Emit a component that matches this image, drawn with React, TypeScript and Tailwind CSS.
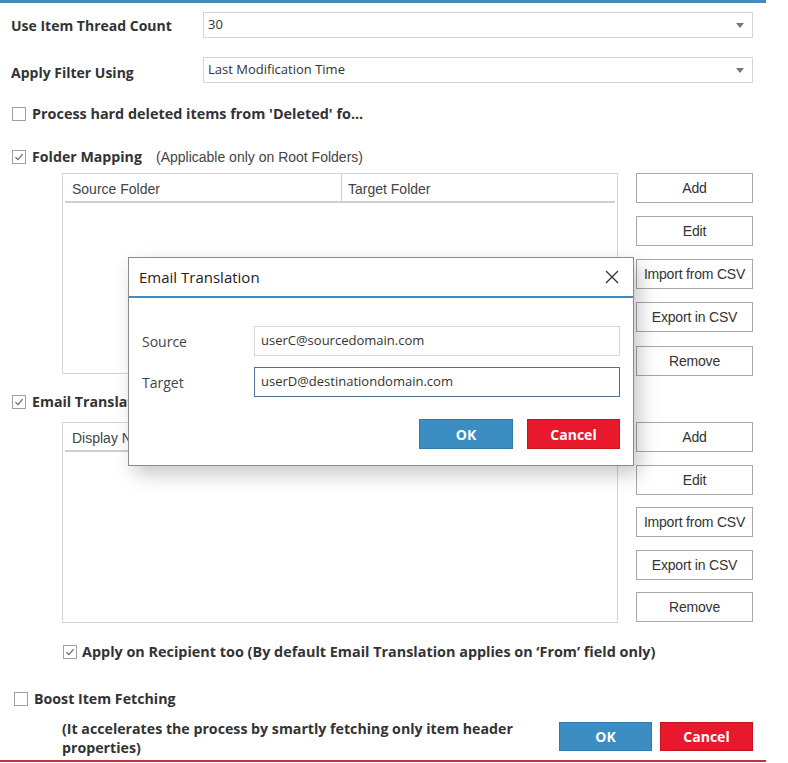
import React from "react";

const seg = { fontFamily: '"Open Sans", "Noto Sans", sans-serif' };
const ari = { fontFamily: '"Liberation Sans", Arial, sans-serif' };

function Check({ checked }: { checked?: boolean }) {
  return (
    <span className="w-[14px] h-[14px] border border-[#a0a0a0] bg-white flex items-center justify-center shrink-0">
      {checked && (
        <svg width="10" height="10" viewBox="0 0 10 10">
          <path d="M1.5 5.2 L4 7.6 L8.6 2.2" fill="none" stroke="#6b6b6b" strokeWidth="1.3" />
        </svg>
      )}
    </span>
  );
}

function Select({ value }: { value: string }) {
  return (
    <div className="w-[550px] h-[26px] border border-[#d4d4d4] bg-white flex items-center justify-between pl-[4px] pr-[8px]">
      <span className="text-[13px] text-[#333]" style={seg}>{value}</span>
      <svg width="8" height="5" viewBox="0 0 8 5">
        <path d="M0 0 H8 L4 5 Z" fill="#777" />
      </svg>
    </div>
  );
}

function SideButtons({ gaps }: { gaps: string[] }) {
  const labels = ["Add", "Edit", "Import from CSV", "Export in CSV", "Remove"];
  return (
    <div className="flex flex-col w-[117px]">
      {labels.map((l, i) => (
        <div
          key={l}
          className={`h-[30px] border border-[#a8a8a8] bg-white flex items-center justify-center text-[14px] text-[#333] tracking-[-0.2px] ${gaps[i]}`}
          style={ari}
        >
          {l}
        </div>
      ))}
    </div>
  );
}

function Grid({ first, second }: { first: string; second?: string }) {
  return (
    <div className="w-[556px] h-[201px] border border-[#d4d4d4] bg-white">
      <div className="h-[29px] flex border-b-2 border-[#cfcfcf] mx-[2px]">
        <div className="w-[277px] border-r border-[#cfcfcf] pl-[7px] pt-[3px] flex items-center text-[14px] text-[#444]" style={ari}>
          {first}
        </div>
        {second && (
          <div className="pl-[6px] pt-[3px] flex items-center text-[14px] text-[#444]" style={ari}>
            {second}
          </div>
        )}
      </div>
    </div>
  );
}

export default function App() {
  return (
    <div className="w-[788px] h-[763px] bg-white relative overflow-hidden text-[#333]" style={seg}>
      <div className="w-[766px] h-[762px] border-t-[3px] border-t-[#4a8bb6] border-b-2 border-b-[#b23a3a] flex flex-col">
        {/* thread count */}
        <div className="flex items-center mt-[9px] h-[26px]">
          <div className="w-[203px] pl-[11px] text-[14px] font-bold">Use Item Thread Count</div>
          <Select value="30" />
        </div>
        {/* filter */}
        <div className="flex mt-[19px] h-[26px]">
          <div className="w-[203px] pl-[11px] pt-[6px] h-[24px] overflow-hidden text-[14px] font-bold leading-[20px]">
            Apply Filter Using
          </div>
          <Select value="Last Modification Time" />
        </div>

        <div className="flex items-center gap-[6px] pl-[12px] mt-[23px] h-[16px]">
          <Check />
          <span className="text-[14.4px] font-bold">Process hard deleted items from 'Deleted' fo...</span>
        </div>

        <div className="flex items-center gap-[6px] pl-[12px] mt-[27px] h-[16px]">
          <Check checked />
          <span className="text-[14.2px] font-bold">Folder Mapping</span>
          <span className="text-[14px] ml-[8px] text-[#444]" style={ari}>(Applicable only on Root Folders)</span>
        </div>

        <div className="flex pl-[62px] gap-[18px] mt-[8px]">
          <Grid first="Source Folder" second="Target Folder" />
          <SideButtons gaps={["", "mt-[13px]", "mt-[13px]", "mt-[13px]", "mt-[14px]"]} />
        </div>

        <div className="flex items-center gap-[6px] pl-[12px] mt-[18px] h-[16px]">
          <Check checked />
          <span className="text-[14.2px] font-bold">Email Translation</span>
        </div>

        <div className="flex pl-[62px] gap-[18px] mt-[12px]">
          <Grid first="Display Name" />
          <SideButtons gaps={["", "mt-[13px]", "mt-[12px]", "mt-[13px]", "mt-[12px]"]} />
        </div>

        <div className="flex items-center gap-[5px] pl-[63px] mt-[21px] h-[16px]">
          <Check checked />
          <span className="text-[14.4px] font-bold">
            Apply on Recipient too (By default Email Translation applies on ‘From’ field only)
          </span>
        </div>

        <div className="flex items-center gap-[6px] pl-[14px] mt-[31px] h-[16px]">
          <Check />
          <span className="text-[14.2px] font-bold">Boost Item Fetching</span>
        </div>

        <div className="flex pl-[62px] mt-[6px]">
          <div className="w-[470px] text-[14.2px] font-bold leading-[19px] pt-[6px]">
            (It accelerates the process by smartly fetching only item header properties)
          </div>
          <div className="flex gap-[8px] ml-[27px] mt-[9px]">
            <div className="w-[93px] h-[29px] bg-[#3b8dc2] border border-[#2f7bab] text-white font-bold text-[14px] flex items-center justify-center">
              OK
            </div>
            <div className="w-[93px] h-[29px] bg-[#e8192c] border border-[#c8141f] text-white font-bold text-[14px] flex items-center justify-center">
              Cancel
            </div>
          </div>
        </div>
      </div>

      {/* Email Translation dialog */}
      <div className="absolute left-[128px] top-[257px] w-[506px] h-[209px] bg-white border border-[#8a8a8a] shadow-[6px_8px_18px_rgba(0,0,0,0.22)] flex flex-col">
        <div className="h-[40px] flex items-center justify-between pl-[10px] pr-[14px] border-b-2 border-[#3b8dc2]">
          <span className="text-[15px] text-[#222]">Email Translation</span>
          <svg width="14" height="14" viewBox="0 0 14 14">
            <path d="M1 1 L13 13 M13 1 L1 13" stroke="#333" strokeWidth="1.3" />
          </svg>
        </div>
        <div className="flex items-center mt-[28px] pl-[13px]">
          <span className="w-[112px] text-[14px] text-[#444]">Source</span>
          <div className="w-[366px] h-[30px] border border-[#d8d8d8] flex items-center pl-[6px] text-[13px] text-[#333]">
            userC@sourcedomain.com
          </div>
        </div>
        <div className="flex items-center mt-[11px] pl-[13px]">
          <span className="w-[112px] text-[14px] text-[#444]">Target</span>
          <div className="w-[366px] h-[30px] border border-[#4f6f99] flex items-center pl-[6px] text-[13px] text-[#333]">
            userD@destinationdomain.com
          </div>
        </div>
        <div className="flex justify-end gap-[14px] pr-[13px] mt-[22px]">
          <div className="w-[94px] h-[30px] bg-[#3b8dc2] border border-[#2f7bab] text-white font-bold text-[14px] flex items-center justify-center">
            OK
          </div>
          <div className="w-[93px] h-[30px] bg-[#e8192c] border border-[#c8141f] text-white font-bold text-[14px] flex items-center justify-center">
            Cancel
          </div>
        </div>
      </div>
    </div>
  );
}
